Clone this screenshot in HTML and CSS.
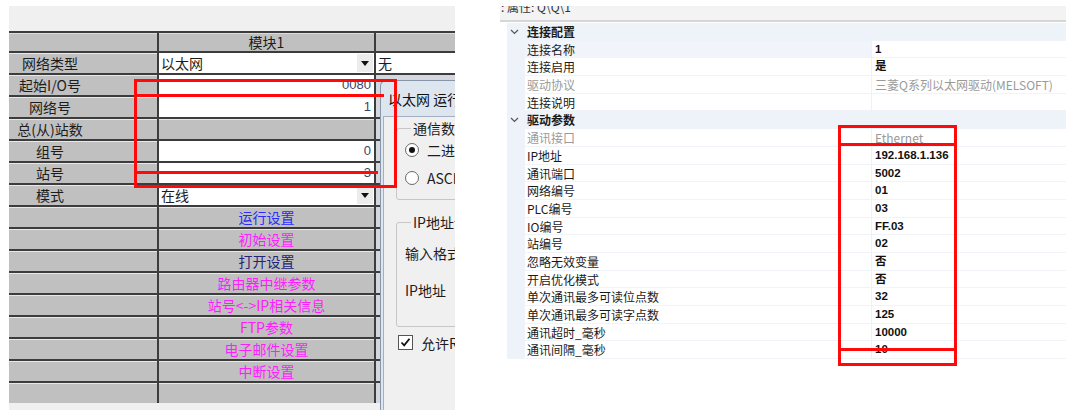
FILE: index.html
```html
<!DOCTYPE html>
<html lang="zh-CN">
<head>
<meta charset="utf-8">
<title>网络参数</title>
<link rel="stylesheet" href="styles.css">
</head>
<body>
<div class="page">
  <div class="left">
    <div class="grid">
      <div class="c hd"></div><div class="c hd ctr">模块1</div><div class="c hd"></div>

      <div class="c lb"><span>网络类型</span></div>
      <div class="c in"><span class="tx">以太网</span><span class="dd"></span></div>
      <div class="c in c3w">无</div>

      <div class="c lb"><span>起始I/O号</span></div>
      <div class="c in num">0080</div>
      <div class="c c3"></div>

      <div class="c lb"><span>网络号</span></div>
      <div class="c in num">1</div>
      <div class="c c3"></div>

      <div class="c lb"><span>总(从)站数</span></div>
      <div class="c"></div>
      <div class="c c3"></div>

      <div class="c lb"><span>组号</span></div>
      <div class="c in num">0</div>
      <div class="c c3"></div>

      <div class="c lb"><span>站号</span></div>
      <div class="c in num">3</div>
      <div class="c c3"></div>

      <div class="c lb"><span>模式</span></div>
      <div class="c in"><span class="tx">在线</span><span class="dd"></span></div>
      <div class="c c3"></div>

      <div class="c"></div><div class="c btn blue">运行设置</div><div class="c c3"></div>
      <div class="c"></div><div class="c btn pink">初始设置</div><div class="c c3"></div>
      <div class="c"></div><div class="c btn navy">打开设置</div><div class="c c3"></div>
      <div class="c"></div><div class="c btn pink">路由器中继参数</div><div class="c c3"></div>
      <div class="c"></div><div class="c btn pink">站号&lt;-&gt;IP相关信息</div><div class="c c3"></div>
      <div class="c"></div><div class="c btn pink">FTP参数</div><div class="c c3"></div>
      <div class="c"></div><div class="c btn pink">电子邮件设置</div><div class="c c3"></div>
      <div class="c"></div><div class="c btn pink">中断设置</div><div class="c c3"></div>
      <div class="c"></div><div class="c btn"></div><div class="c c3"></div>
    </div>

    <div class="dlg">
      <div class="dlg-title">以太网 运行设置</div>
      <div class="dlg-client">
        <fieldset class="grp g1">
          <legend>通信数据代码设置</legend>
          <div class="opt"><span class="radio on"></span><span>二进制码通信</span></div>
          <div class="opt"><span class="radio"></span><span>ASCII码通信</span></div>
        </fieldset>
        <fieldset class="grp g2">
          <legend>IP地址设置</legend>
          <div class="line l1">输入格式</div>
          <div class="line l2">IP地址</div>
        </fieldset>
        <div class="chk-row">
          <span class="chk"><svg width="11" height="11" viewBox="0 0 11 11"><path d="M1.5 5.5 L4.2 8.3 L9.5 1.8" fill="none" stroke="#111" stroke-width="1.8"/></svg></span>
          <span>允许RUN中写入</span>
        </div>
      </div>
    </div>

    <div class="red ra"></div>
    <div class="red rl1"></div>
    <div class="red rl2"></div>
  </div>

  <div class="right">
    <div class="phead"><span>: 属性: Q\Q\1</span></div>
    <div class="rows">
      <div class="row grpr"><span class="gut"><svg width="9" height="6" viewBox="0 0 9 6"><path d="M1 1 L4.5 4.5 L8 1" fill="none" stroke="#555" stroke-width="1.2"/></svg></span><span class="lab">连接配置</span><span class="val"></span></div>
      <div class="row"><span class="gut"></span><span class="lab sel">连接名称</span><span class="val b">1</span></div>
      <div class="row"><span class="gut"></span><span class="lab">连接启用</span><span class="val b">是</span></div>
      <div class="row"><span class="gut"></span><span class="lab dis">驱动协议</span><span class="val dis">三菱Q系列以太网驱动(MELSOFT)</span></div>
      <div class="row"><span class="gut"></span><span class="lab">连接说明</span><span class="val"></span></div>
      <div class="row grpr"><span class="gut"><svg width="9" height="6" viewBox="0 0 9 6"><path d="M1 1 L4.5 4.5 L8 1" fill="none" stroke="#555" stroke-width="1.2"/></svg></span><span class="lab">驱动参数</span><span class="val"></span></div>
      <div class="row"><span class="gut"></span><span class="lab dis">通讯接口</span><span class="val dis">Ethernet</span></div>
      <div class="row"><span class="gut"></span><span class="lab">IP地址</span><span class="val b">192.168.1.136</span></div>
      <div class="row"><span class="gut"></span><span class="lab">通讯端口</span><span class="val b">5002</span></div>
      <div class="row"><span class="gut"></span><span class="lab">网络编号</span><span class="val b">01</span></div>
      <div class="row"><span class="gut"></span><span class="lab">PLC编号</span><span class="val b">03</span></div>
      <div class="row"><span class="gut"></span><span class="lab">IO编号</span><span class="val b">FF.03</span></div>
      <div class="row"><span class="gut"></span><span class="lab">站编号</span><span class="val b">02</span></div>
      <div class="row"><span class="gut"></span><span class="lab">忽略无效变量</span><span class="val b">否</span></div>
      <div class="row"><span class="gut"></span><span class="lab">开启优化模式</span><span class="val b">否</span></div>
      <div class="row"><span class="gut"></span><span class="lab">单次通讯最多可读位点数</span><span class="val b">32</span></div>
      <div class="row"><span class="gut"></span><span class="lab">单次通讯最多可读字点数</span><span class="val b">125</span></div>
      <div class="row"><span class="gut"></span><span class="lab">通讯超时_毫秒</span><span class="val b">10000</span></div>
      <div class="row"><span class="gut"></span><span class="lab">通讯间隔_毫秒</span><span class="val b">10</span></div>
    </div>
    <div class="red rc"></div>
    <div class="red rd"></div>
    <div class="red re"></div>
  </div>
</div>
</body>
</html>
```

FILE: styles.css
```css
html, body {
  margin: 0;
  background: #ffffff;
  font-family: "Noto Sans CJK SC", "Noto Sans", sans-serif;
}

.page {
  display: flex;
  align-items: flex-start;
  width: 1077px;
  height: 419px;
  overflow: hidden;
}

/* ---------- left panel ---------- */
.left {
  position: relative;
  margin: 6px 0 0 9px;
  width: 446px;
  height: 404px;
  background: #f0f0f0;
  overflow: hidden;
  flex: none;
}

.grid {
  margin-top: 25px;
  padding-top: 2px;
  display: grid;
  grid-template-columns: 148px 215px 79px;
  grid-template-rows: 18px repeat(16, 20px);
  column-gap: 2px;
  row-gap: 2px;
  background: #3c3c3c;
}

.c {
  background: #c0c0c0;
  box-shadow: inset 0 1px 0 #e8e8e8;
  font-size: 14px;
  line-height: 20px;
  color: #1c1c1c;
  white-space: nowrap;
  overflow: hidden;
}

.hd {
  line-height: 18px;
  box-shadow: inset 0 1px 0 #dcdcdc;
}

.ctr { text-align: center; }

.lb span {
  display: inline-block;
  width: 82px;
  text-align: center;
}

.in {
  background: #ffffff;
  box-shadow: none;
  display: flex;
  align-items: center;
}

.in .tx {
  padding-left: 2px;
  flex: 1;
}

.dd {
  width: 16px;
  height: 18px;
  margin-right: 1px;
  background: #ececec;
  position: relative;
  flex: none;
}

.dd::after {
  content: "";
  position: absolute;
  left: 4px;
  top: 7px;
  border-left: 4px solid transparent;
  border-right: 4px solid transparent;
  border-top: 5px solid #111;
}

.num {
  justify-content: flex-end;
  padding-right: 3px;
  color: #3c4468;
  font-family: "Liberation Sans", sans-serif;
  font-size: 13px;
}

.c3w {
  padding-left: 2px;
}

.c3 {
  background: #d4d8de;
  box-shadow: none;
}

.btn {
  text-align: center;
  font-size: 14px;
}

.blue { color: #2a2aff; }
.pink { color: #ff1cff; }
.navy { color: #23237a; }

/* dialog */
.dlg {
  position: absolute;
  left: 371px;
  top: 74px;
  width: 160px;
  height: 340px;
  box-sizing: border-box;
  background: #dde5ee;
  border-left: 1px solid #8896aa;
  border-top: 1px solid #8896aa;
  border-radius: 6px 0 0 0;
  padding-left: 2px;
  display: flex;
  flex-direction: column;
}

.dlg-title {
  height: 35px;
  line-height: 36px;
  padding-left: 5px;
  font-size: 14px;
  color: #111;
  white-space: nowrap;
  flex: none;
}

.dlg-client {
  flex: 1;
  background: #f0f0f0;
  border-left: 1px solid #a4b0c0;
  border-top: 1px solid #a4b0c0;
  padding: 0 0 0 12px;
  font-size: 14px;
  color: #1c1c1c;
  white-space: nowrap;
}

.grp {
  margin: 1px 0 0 0;
  border: 1px solid #c6c6c6;
  border-radius: 3px;
  padding: 0 0 0 8px;
  min-width: 0;
}

.grp legend {
  margin-left: 6px;
  padding: 0 2px;
  line-height: 20px;
  font-size: 14px;
}

.g1 { padding-bottom: 9px; }

.opt {
  display: flex;
  align-items: center;
  gap: 8px;
  height: 24px;
  margin-top: 0;
}

.opt + .opt { margin-top: 4px; }

.radio {
  width: 12px;
  height: 12px;
  border: 1px solid #6a6a6a;
  border-radius: 50%;
  background: #fdfdfd;
  position: relative;
  flex: none;
}

.radio.on::after {
  content: "";
  position: absolute;
  left: 3px;
  top: 3px;
  width: 6px;
  height: 6px;
  border-radius: 50%;
  background: #111;
}

.g2 {
  margin-top: 12px;
  padding-bottom: 25px;
}

.line { line-height: 22px; }
.l1 { margin-top: 10px; }
.l2 { margin-top: 15px; }

.chk-row {
  display: flex;
  align-items: center;
  gap: 8px;
  margin-top: 8px;
  margin-left: 2px;
  height: 15px;
}

.chk {
  width: 13px;
  height: 13px;
  border: 1px solid #555;
  background: #fff;
  display: flex;
  align-items: center;
  justify-content: center;
  flex: none;
}

/* red annotations */
.red {
  position: absolute;
  box-sizing: border-box;
  border: 3px solid #ff0a0a;
  pointer-events: none;
}

.ra { left: 125px; top: 73px; width: 263px; height: 109px; }
.rl1 { left: 125px; top: 88px; width: 250px; height: 3px; border-width: 3px 0 0 0; }
.rl2 { left: 125px; top: 165px; width: 244px; height: 3px; border-width: 3px 0 0 0; }

/* ---------- right panel ---------- */
.right {
  position: relative;
  margin: 6px 0 0 45px;
  width: 566px;
  flex: none;
  font-size: 12px;
  color: #1a1a1a;
}

.phead {
  height: 14px;
  background: #f3f3f3;
  border-bottom: 2px solid #d6d6d6;
  overflow: hidden;
}

.phead span {
  display: block;
  margin-top: -8px;
  padding-left: 1px;
  line-height: 18px;
  font-size: 12px;
  color: #333;
  white-space: nowrap;
}

.rows {
  margin: 1px 0 0 7px;
  width: 559px;
}

.row {
  display: grid;
  grid-template-columns: 18px 346px 195px;
  height: 17.7px;
  line-height: 17.7px;
  white-space: nowrap;
}

.gut {
  background: #eef2f9;
  display: flex;
  align-items: center;
  padding-left: 3px;
}

.lab {
  padding-left: 2px;
  background: #fff;
  box-shadow: inset 0 -1px 0 #f0f3f8;
}

.lab.sel { background: #f1f5fb; }

.val {
  padding-left: 3px;
  background: #fff;
  border-left: 1px solid #eef1f6;
  box-shadow: inset 0 -1px 0 #f0f3f8;
}

.b {
  font-family: "Liberation Sans", "Noto Sans CJK SC", sans-serif;
  font-size: 11.5px;
  font-weight: 700;
  color: #111;
}

.dis { color: #9a9a9a; }

.grpr .lab,
.grpr .val {
  background: #eef2f9;
  box-shadow: none;
  border-left: 0;
}

.grpr .lab { font-weight: 700; }

.rc { left: 338px; top: 119px; width: 119px; height: 21px; }
.rd { left: 338px; top: 137px; width: 119px; height: 223px; }
.re { left: 338px; top: 342px; width: 117px; height: 3px; border-width: 3px 0 0 0; }
```
